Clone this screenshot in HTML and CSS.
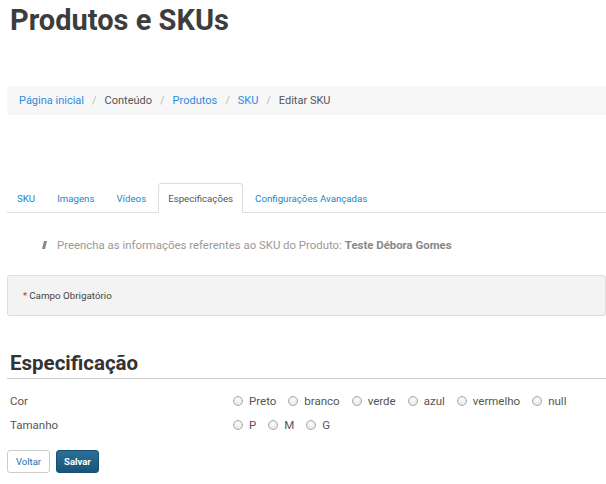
FILE: index.html
```html
<!DOCTYPE html>
<html lang="pt">
<head>
<meta charset="utf-8">
<title>Produtos e SKUs</title>
<link rel="stylesheet" href="styles.css">
</head>
<body>
<div class="page">
  <h1 class="title">Produtos e SKUs</h1>
  <nav class="crumbs">
    <a class="crumb-link" href="#">Página inicial</a><span class="sep">/</span>
    <span class="crumb">Conteúdo</span><span class="sep">/</span>
    <a class="crumb-link" href="#">Produtos</a><span class="sep">/</span>
    <a class="crumb-link" href="#">SKU</a><span class="sep">/</span>
    <span class="crumb">Editar SKU</span>
  </nav>
  <ul class="tabs">
    <li class="tab"><a href="#">SKU</a></li>
    <li class="tab"><a href="#">Imagens</a></li>
    <li class="tab"><a href="#">Vídeos</a></li>
    <li class="tab active"><a href="#">Especificações</a></li>
    <li class="tab"><a href="#">Configurações Avançadas</a></li>
  </ul>
  <p class="info"><span class="info-icon"></span>Preencha as informações referentes ao SKU do Produto: <b>Teste Débora Gomes</b></p>
  <div class="required-box"><span class="star">*</span> Campo Obrigatório</div>
  <h2 class="section">Especificação</h2>
  <div class="fields">
    <div class="field">
      <span class="field-label">Cor</span>
      <div class="options">
        <label class="opt"><span class="radio"></span>Preto</label>
        <label class="opt"><span class="radio"></span>branco</label>
        <label class="opt"><span class="radio"></span>verde</label>
        <label class="opt"><span class="radio"></span>azul</label>
        <label class="opt"><span class="radio"></span>vermelho</label>
        <label class="opt"><span class="radio"></span>null</label>
      </div>
    </div>
    <div class="field">
      <span class="field-label">Tamanho</span>
      <div class="options">
        <label class="opt"><span class="radio"></span>P</label>
        <label class="opt"><span class="radio"></span>M</label>
        <label class="opt"><span class="radio"></span>G</label>
      </div>
    </div>
  </div>
  <div class="actions">
    <button class="btn btn-back">Voltar</button>
    <button class="btn btn-save">Salvar</button>
  </div>
</div>
</body>
</html>
```
FILE: styles.css
```css
* { box-sizing: border-box; }
body {
  margin: 0;
  background: #fff;
  font-family: "Roboto", "Liberation Sans", sans-serif;
  color: #555;
}
.page { padding: 0 0 0 7px; }
.title {
  margin: 0;
  padding: 1px 0 0 3px;
  height: 86px;
  font-size: 29px;
  line-height: 38px;
  font-weight: 700;
  color: #3d3d3d;
}
.crumbs {
  background: #f7f7f8;
  height: 29px;
  display: flex;
  align-items: center;
  padding-left: 12px;
  font-size: 11px;
}
.crumb-link { color: #2e8be0; text-decoration: none; }
.crumb { color: #555; }
.sep { color: #bbb; margin: 0 8px; }
.tabs {
  list-style: none;
  margin: 68px 0 0 0;
  padding: 0;
  display: flex;
  height: 30px;
  border-bottom: 1px solid #ddd;
  font-size: 9.7px;
}
.tab { display: flex; }
.tab a {
  display: flex;
  align-items: center;
  padding: 0 9px;
  color: #1a86cc;
  text-decoration: none;
  border: 1px solid transparent;
  border-radius: 3px 3px 0 0;
  margin-bottom: -1px;
  margin-right: 2px;
}
.tab.active a {
  color: #555;
  background: #fff;
  border-color: #ddd #ddd #fff #ddd;
}
.info {
  margin: 0;
  height: 62px;
  display: flex;
  align-items: center;
  padding: 2px 0 0 36px;
  font-size: 11.4px;
  color: #999;
}
.info b { color: #888; margin-left: 3px; }
.info-icon {
  width: 3px;
  height: 8px;
  background: #888;
  transform: skewX(-14deg);
  margin-right: 11px;
}
.required-box {
  height: 41px;
  background: #f3f3f3;
  border: 1px solid #ddd;
  border-radius: 3px;
  display: flex;
  align-items: center;
  padding-left: 15px;
  font-size: 9.8px;
  color: #444;
}
.star { color: #e22; margin-right: 2px; }
.section {
  margin: 35px 0 0 0;
  padding: 0 0 3px 3px;
  font-size: 20.5px;
  font-weight: 700;
  color: #333;
  border-bottom: 1px solid #ccc;
}
.fields { padding-top: 10px; }
.field {
  display: flex;
  align-items: center;
  height: 24px;
  font-size: 11.5px;
}
.field-label { width: 226px; padding-left: 3px; color: #555; }
.options { display: flex; gap: 12px; color: #555; }
.opt { display: flex; align-items: center; }
.radio {
  width: 10px;
  height: 10px;
  border-radius: 50%;
  border: 1px solid #aaa;
  background: radial-gradient(circle at 50% 40%, #fff, #ddd);
  margin-right: 6px;
}
.actions { display: flex; gap: 6px; margin-top: 13px; }
.btn {
  height: 23px;
  font-family: inherit;
  font-size: 9.5px;
  border-radius: 3px;
  padding: 0 7px;
}
.btn-back { background: #fff; border: 1px solid #ccc; color: #1a6fa8; padding: 0 8px; }
.btn-save {
  background: linear-gradient(#2b7099, #185478);
  border: 1px solid #175073;
  color: #fff;
  font-weight: 700;
}
```
